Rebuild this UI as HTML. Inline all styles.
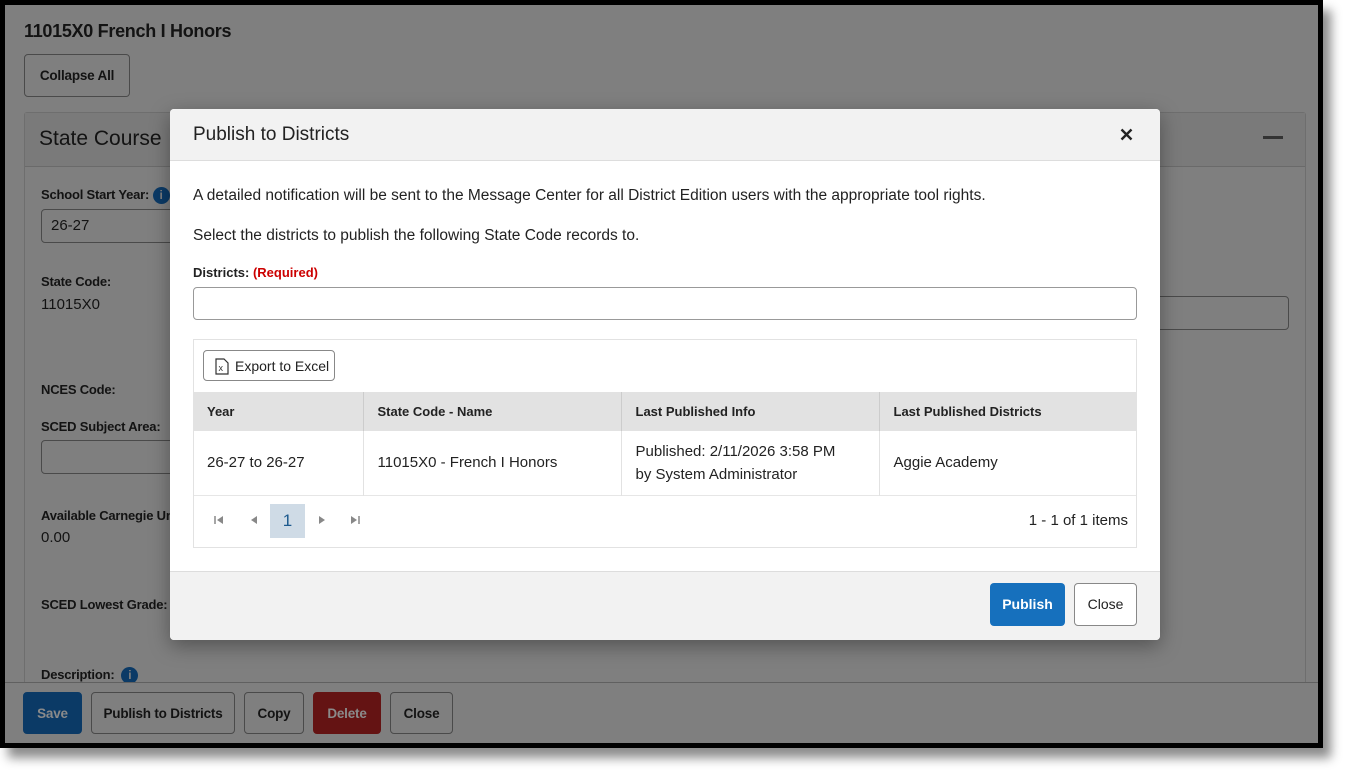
<!DOCTYPE html>
<html><head><style>
*{box-sizing:border-box;margin:0;padding:0}
body{width:1348px;height:773px;background:#fff;position:relative;overflow:hidden;font-family:"Liberation Sans",sans-serif;color:#222}
.a{position:absolute}
.frame{left:0;top:0;width:1323px;height:748px;background:#000;box-shadow:8px 10px 10px rgba(0,0,0,.45)}
.page{left:5px;top:5px;width:1313px;height:738px;background:#7f7f7f;overflow:hidden}
.dk{color:#131313}
.btn{position:absolute;border:1px solid #4a4a4a;border-radius:4px;font-size:13.5px;font-weight:bold;display:flex;align-items:center;justify-content:center;color:#131313;letter-spacing:-0.2px}
.lbl{position:absolute;font-size:13px;font-weight:bold;color:#131313;letter-spacing:-0.2px}
.val{position:absolute;font-size:15px;color:#131313}
.inp{position:absolute;border:1px solid #4a4a4a;border-radius:4px}
.info{display:inline-block;width:17px;height:17px;border-radius:50%;background:#0b3a66;color:#7f7f7f;font-size:12px;text-align:center;line-height:17px;font-weight:bold;vertical-align:middle}
.modal{left:170px;top:109px;width:990px;height:531px;background:#fff;border-radius:4px;overflow:hidden;box-shadow:0 6px 20px rgba(0,0,0,.35)}
th,td{text-align:left}
</style></head><body>
<div class="a frame"></div>
<div class="a page">
  <div class="a dk" style="left:19px;top:16px;font-size:18px;font-weight:bold;letter-spacing:-0.3px">11015X0 French I Honors</div>
  <div class="btn" style="left:19px;top:49px;width:106px;height:43px">Collapse All</div>
  <div class="a" style="left:19px;top:107px;width:1282px;height:600px;border:1px solid #6e6e6e;border-radius:3px">
    <div style="height:54px;border-bottom:1px solid #6a6a6a;background:#7a7a7a"></div>
  </div>
  <div class="a dk" style="left:34px;top:122px;font-size:21px">State Course</div>
  <div class="a" style="left:1258px;top:131px;width:20px;height:3px;background:#333"></div>
  <div class="lbl" style="left:36px;top:182px">School Start Year: <span class="info">i</span></div>
  <div class="inp" style="left:36px;top:204px;width:140px;height:34px"></div>
  <div class="val" style="left:46px;top:212px">26-27</div>
  <div class="lbl" style="left:36px;top:269px">State Code:</div>
  <div class="val" style="left:36px;top:291px">11015X0</div>
  <div class="inp" style="left:1150px;top:291px;width:134px;height:34px"></div>
  <div class="lbl" style="left:36px;top:377px">NCES Code:</div>
  <div class="lbl" style="left:36px;top:414px">SCED Subject Area:</div>
  <div class="inp" style="left:36px;top:435px;width:140px;height:34px"></div>
  <div class="lbl" style="left:36px;top:503px">Available Carnegie Units</div>
  <div class="val" style="left:36px;top:524px">0.00</div>
  <div class="lbl" style="left:36px;top:592px">SCED Lowest Grade:</div>
  <div class="lbl" style="left:36px;top:662px">Description: &nbsp;<span class="info">i</span></div>
  <div class="a" style="left:0;top:677px;width:1313px;height:61px;background:#7f7f7f;border-top:1px solid #606060"></div>
  <div class="btn" style="left:18px;top:687px;width:59px;height:42px;background:#0b3a66;border-color:#0b3a66;color:#8a8a8a">Save</div>
  <div class="btn" style="left:86px;top:687px;width:144px;height:42px">Publish to Districts</div>
  <div class="btn" style="left:239px;top:687px;width:60px;height:42px">Copy</div>
  <div class="btn" style="left:308px;top:687px;width:68px;height:42px;background:#641313;border-color:#641313;color:#8a8a8a">Delete</div>
  <div class="btn" style="left:385px;top:687px;width:63px;height:42px">Close</div>
</div>

<div class="a modal">
  <div style="height:52px;background:#f2f2f2;border-bottom:1px solid #ddd;position:relative">
    <div class="a" style="left:23px;top:15px;font-size:19px;color:#222">Publish to Districts</div>
    <svg class="a" style="left:950px;top:19px" width="13" height="13" viewBox="0 0 13 13"><path d="M1.5 1.5l10 10M11.5 1.5l-10 10" stroke="#222" stroke-width="2.4"/></svg>
  </div>
  <div class="a" style="left:23px;top:78px;font-size:15.5px;color:#222">A detailed notification will be sent to the Message Center for all District Edition users with the appropriate tool rights.</div>
  <div class="a" style="left:23px;top:118px;font-size:15.5px;color:#222">Select the districts to publish the following State Code records to.</div>
  <div class="a" style="left:23px;top:156px;font-size:13px;font-weight:bold;color:#222">Districts: <span style="color:#c00">(Required)</span></div>
  <div class="a" style="left:23px;top:178px;width:944px;height:33px;border:1px solid #999;border-radius:4px"></div>
  <div class="a" style="left:23px;top:230px;width:944px;height:209px;border:1px solid #e2e2e2">
    <div class="a" style="left:9px;top:10px;width:132px;height:31px;border:1px solid #888;border-radius:4px;font-size:14px;color:#222">
      <svg class="a" style="left:11px;top:7px" width="14" height="17" viewBox="0 0 14 17"><path d="M1 1h8l4 4v11H1z" fill="none" stroke="#333" stroke-width="1.2"/><text x="3.5" y="13" font-size="9" font-family="Liberation Sans" fill="#333">x</text></svg>
      <span class="a" style="left:31px;top:7px">Export to Excel</span>
    </div>
    <table class="a" style="left:0;top:52px;width:942px;border-collapse:collapse;font-size:15px;color:#222">
      <tr style="background:#e2e2e2;height:39px;font-size:13px;font-weight:bold">
        <th style="width:169px;padding-left:13px;border-right:1px solid #ccc">Year</th>
        <th style="width:258px;padding-left:14px;border-right:1px solid #ccc">State Code - Name</th>
        <th style="width:258px;padding-left:14px;border-right:1px solid #ccc">Last Published Info</th>
        <th style="padding-left:14px">Last Published Districts</th>
      </tr>
      <tr style="height:64px;border-bottom:1px solid #e6e6e6;line-height:23px">
        <td style="padding-left:13px;border-right:1px solid #e2e2e2">26-27 to 26-27</td>
        <td style="padding-left:14px;border-right:1px solid #e2e2e2">11015X0 - French I Honors</td>
        <td style="padding-left:14px;border-right:1px solid #e2e2e2">Published: 2/11/2026 3:58 PM<br>by System Administrator</td>
        <td style="padding-left:14px">Aggie Academy</td>
      </tr>
    </table>
    <svg class="a" style="left:20px;top:175px" width="10" height="10" viewBox="0 0 10 10"><path d="M1 1v8" stroke="#888" stroke-width="1.5"/><path d="M9 1L3 5l6 4z" fill="#888"/></svg>
    <svg class="a" style="left:55px;top:175px" width="10" height="10" viewBox="0 0 10 10"><path d="M8 1L2 5l6 4z" fill="#888"/></svg>
    <div class="a" style="left:76px;top:164px;width:35px;height:34px;background:#cfdbe6;color:#1d5a8e;font-size:17px;text-align:center;line-height:34px">1</div>
    <svg class="a" style="left:123px;top:175px" width="10" height="10" viewBox="0 0 10 10"><path d="M2 1l6 4-6 4z" fill="#888"/></svg>
    <svg class="a" style="left:156px;top:175px" width="10" height="10" viewBox="0 0 10 10"><path d="M1 1l6 4-6 4z" fill="#888"/><path d="M9 1v8" stroke="#888" stroke-width="1.5"/></svg>
    <div class="a" style="right:8px;top:172px;font-size:15px;color:#222">1 - 1 of 1 items</div>
  </div>
  <div class="a" style="left:0;top:462px;width:990px;height:69px;background:#f2f2f2;border-top:1px solid #ddd"></div>
  <div class="a" style="left:820px;top:474px;width:75px;height:43px;background:#1670bd;border-radius:4px;color:#fff;font-size:14px;font-weight:bold;text-align:center;line-height:43px">Publish</div>
  <div class="a" style="left:904px;top:474px;width:63px;height:43px;background:#fff;border:1px solid #888;border-radius:4px;color:#222;font-size:14px;text-align:center;line-height:41px">Close</div>
</div>
</body></html>
